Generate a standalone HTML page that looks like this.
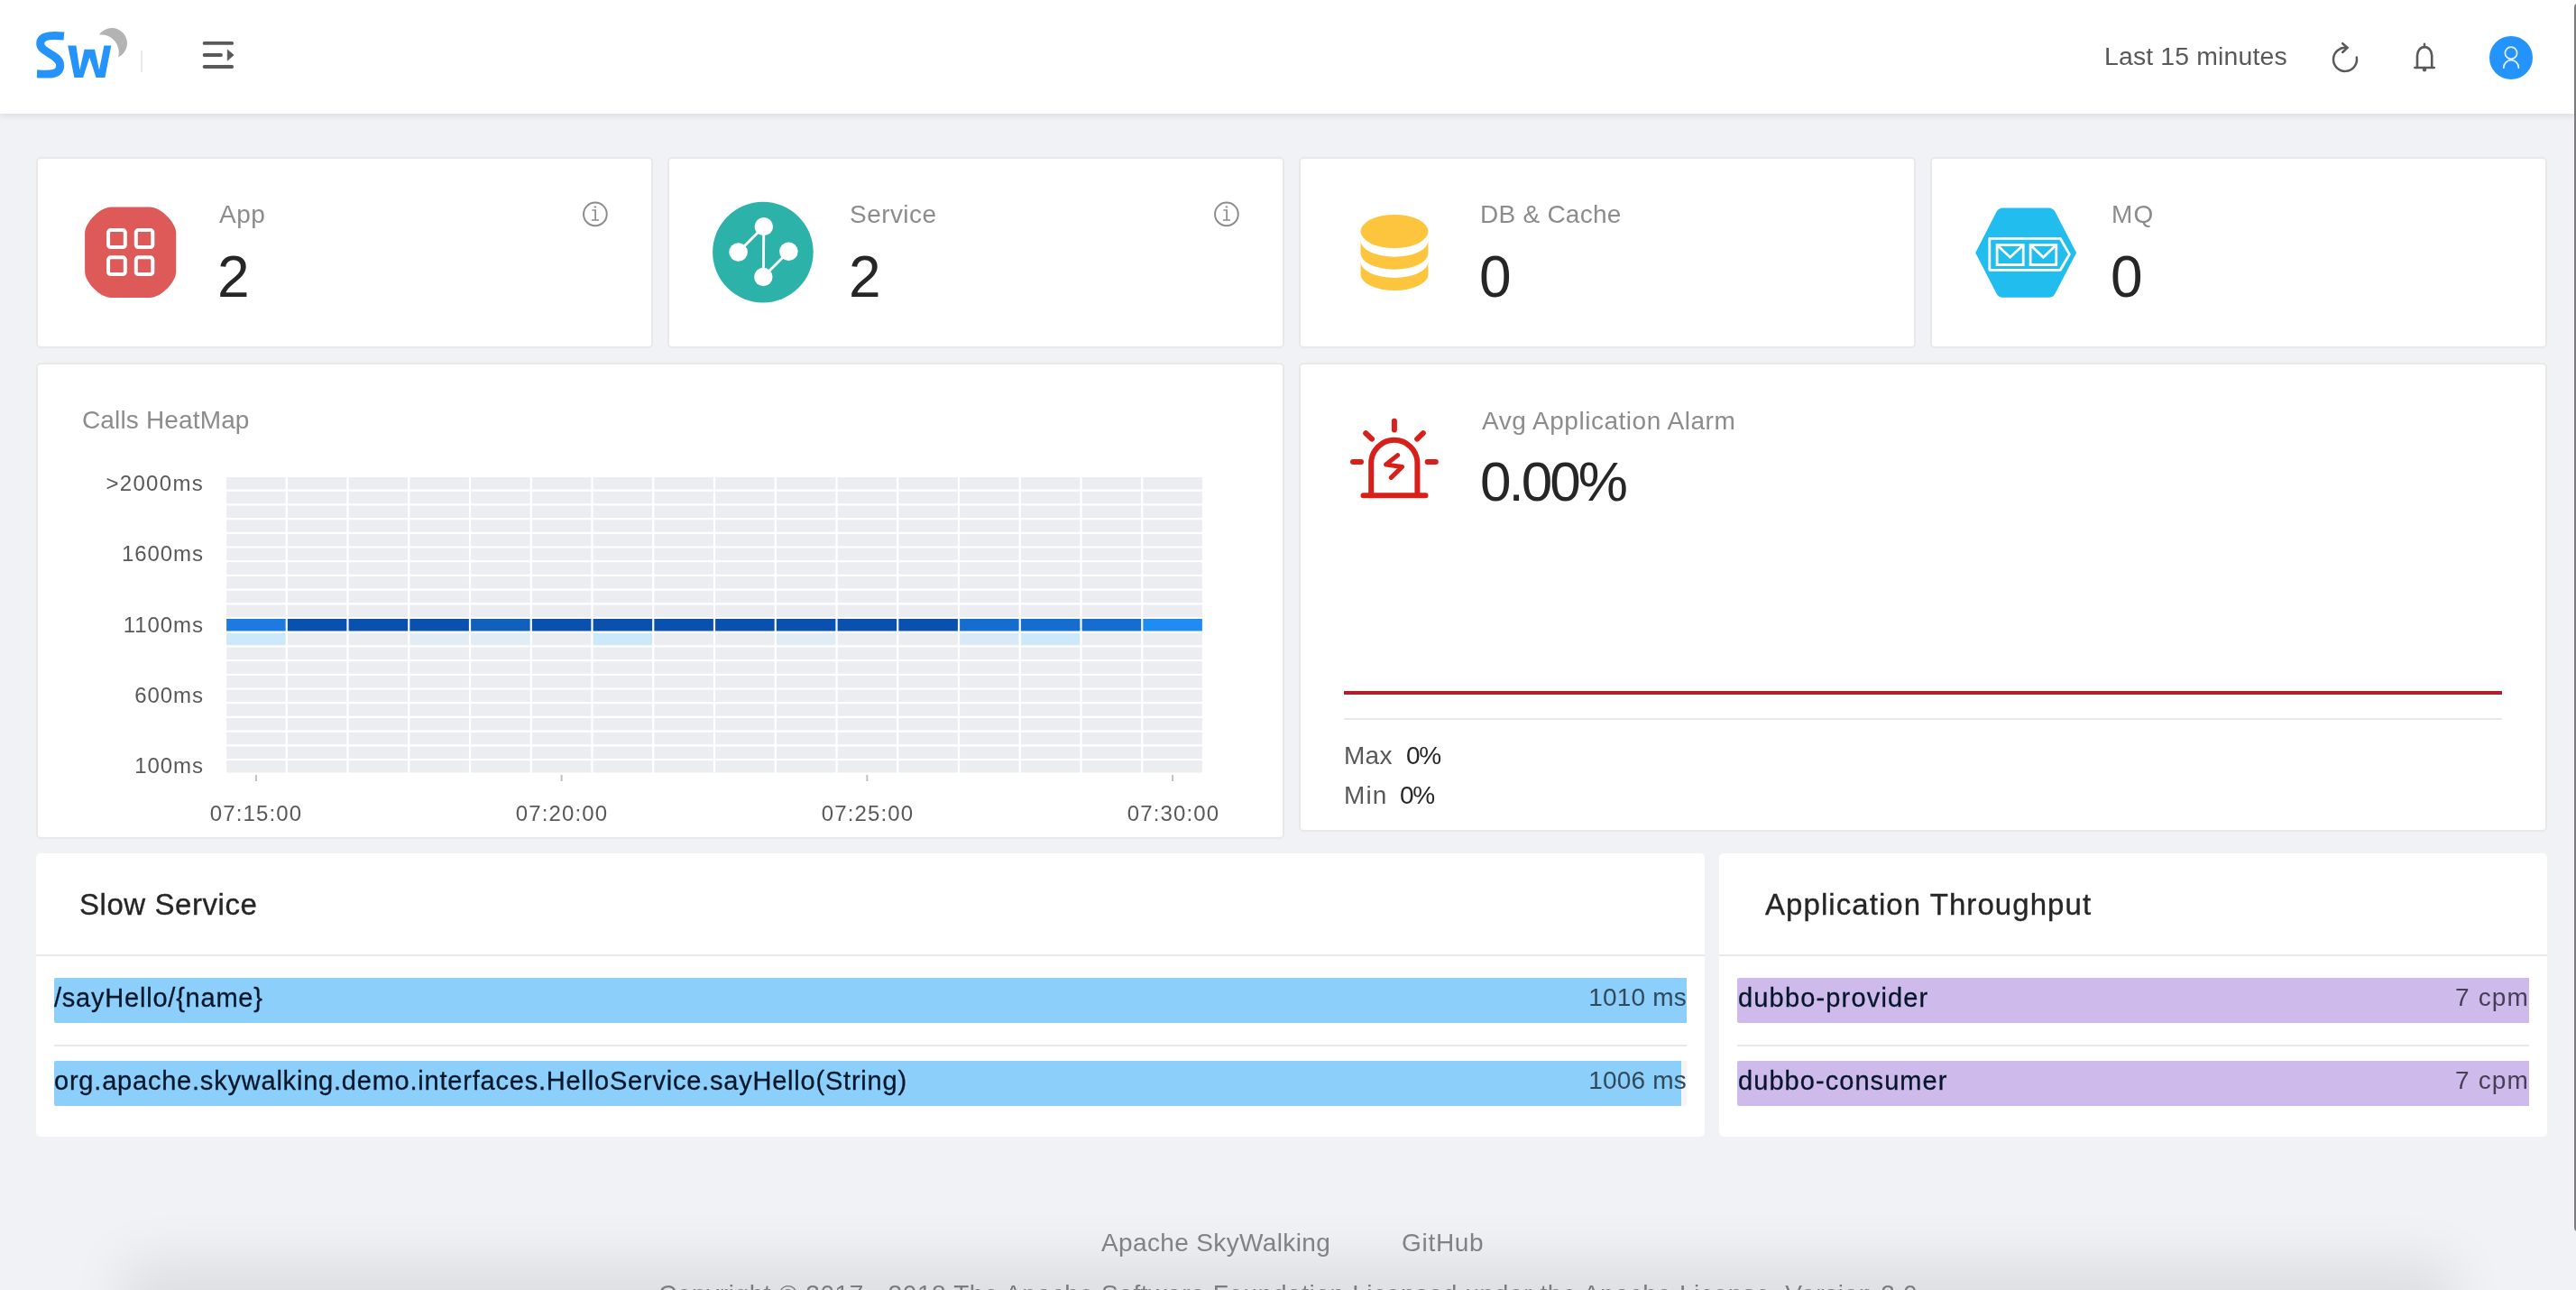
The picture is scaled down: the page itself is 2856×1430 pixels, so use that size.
<!DOCTYPE html>
<html lang="en">
<head>
<meta charset="utf-8">
<title>SkyWalking</title>
<style>
html,body{margin:0;padding:0;}
html{width:2856px;height:1430px;overflow:hidden;background:#f0f2f5;}
body{width:2856px;height:1430px;overflow:hidden;background:#f0f2f5;position:relative;font-family:"Liberation Sans",sans-serif;color:#262626;}
#root{position:absolute;left:0;top:0;width:2856px;height:1430px;overflow:hidden;background:#f0f2f5;}
.abs{position:absolute;}
.t{position:absolute;white-space:nowrap;line-height:1;}
.t,.bt,.bv{will-change:transform;}
#header{position:absolute;left:0;top:0;width:2856px;height:126px;background:#fff;box-shadow:0 2px 8px rgba(0,21,41,.10);}
.card{position:absolute;background:#fff;border:2px solid #e8e8e8;border-radius:5px;box-sizing:border-box;}
.card2{position:absolute;background:#fff;border-radius:5px;}
.hl{position:absolute;background:#e8e8e8;height:2px;}
.c45{color:#8c8c8c;}
.c65{color:#595959;}
.c85{color:#262626;}
.bar{position:absolute;height:50px;border-radius:2px 0 0 2px;}
.blue{background:#8ccffa;}
.purple{background:#cfbaec;}
.bt{position:absolute;white-space:nowrap;line-height:1;font-size:29px;color:#06172b;-webkit-text-stroke:0.3px #06172b;}
.bv{position:absolute;white-space:nowrap;line-height:1;font-size:28px;text-align:right;}
#shadow{position:absolute;left:170px;top:1431px;width:2516px;height:100px;box-shadow:0 0 60px 35px rgba(0,0,0,.08);}
#scroll{position:absolute;left:2854px;top:4px;width:8px;height:1361px;border-radius:4px;background:#7c7c7c;}
.yl{left:60px;width:166px;text-align:right;font-size:24px;letter-spacing:0.95px;}
.xl{top:890px;width:120px;text-align:center;font-size:24px;letter-spacing:1.15px;margin-left:0.6px;}
</style>
</head>
<body>
<div id="root">

<!-- ===== header ===== -->
<div id="header"></div>
<div class="abs" style="left:156px;top:56px;width:2px;height:24px;background:#e8e8e8"></div>
<!-- logo -->
<svg class="abs" style="left:30px;top:20px;filter:blur(0.5px)" width="130" height="80" viewBox="30 20 130 80">
  <path d="M110,38.6 A16.9,16.9 0 1 1 131,63.4 A19.5,19.5 0 0 0 110,38.6 Z" fill="#b3b3b3"/>
  <path d="M70.9,40.1 C62,39.2 44.7,37.6 44.7,48.4 C44.7,58.6 66.7,60.4 66.7,72.5 C66.7,83.8 54,82.4 41,81.8" fill="none" stroke="#2593fc" stroke-width="9"/>
  <path d="M75.2,50.6 L84.4,50.6 L88.4,77.6 L93.6,54.8 L105,54.8 L110,77.6 L115.4,50.6 L123.3,50.6 L116.4,86 L106.5,86 L99.3,63.7 L92.1,86 L82.4,86 Z" fill="#2593fc"/>
</svg>
<!-- menu fold icon -->
<svg class="abs" style="left:220px;top:40px" width="44" height="40" viewBox="220 40 44 40">
  <g stroke="#595959" stroke-width="3.8" stroke-linecap="round" fill="none">
    <path d="M226.6,47.9 H257.2"/>
    <path d="M226.6,61 H245"/>
    <path d="M226.6,74 H257.2"/>
  </g>
  <path d="M252.2,55 L259.2,61 L252.2,67.2 Z" fill="#595959" stroke="#595959" stroke-width="0.6" stroke-linejoin="round"/>
</svg>
<!-- header right -->
<div class="t c65" id="last15" style="left:2333px;top:48px;font-size:28.4px;letter-spacing:0.16px">Last 15 minutes</div>
<svg class="abs" style="left:2580px;top:40px" width="44" height="48" viewBox="2580 40 44 48">
  <path d="M2602.3,53.1 A13,13 0 1 0 2612.8,63.6" fill="none" stroke="#595959" stroke-width="2.5" stroke-linecap="round"/>
  <path d="M2597.2,48.2 L2602.5,52.9 L2597.2,58" fill="none" stroke="#595959" stroke-width="2.5" stroke-linecap="round" stroke-linejoin="miter"/>
</svg>
<svg class="abs" style="left:2668px;top:40px" width="40" height="48" viewBox="2668 40 40 48">
  <path d="M2677.4,75 H2698.7 M2680,75 V61.5 A8.1,9.4 0 0 1 2696.2,61.5 V75" fill="none" stroke="#595959" stroke-width="2.6" stroke-linecap="round" stroke-linejoin="round"/>
  <path d="M2688,48.8 V52" stroke="#595959" stroke-width="2.4" stroke-linecap="round"/>
  <path d="M2685.9,76 H2690.1 V77.5 A2.1,2.1 0 0 1 2685.9,77.5 Z" fill="#595959"/>
</svg>
<svg class="abs" style="left:2756px;top:36px" width="56" height="56" viewBox="2756 36 56 56">
  <circle cx="2784" cy="64" r="24" fill="#2593fc"/>
  <circle cx="2784" cy="58.7" r="6.6" fill="none" stroke="#e6f3ff" stroke-width="1.7"/>
  <path d="M2775.8,75.2 A8.3,8.6 0 0 1 2792.4,75.2" fill="none" stroke="#e6f3ff" stroke-width="1.7" stroke-linecap="round"/>
</svg>

<!-- ===== row 1 cards ===== -->
<div class="card" style="left:40px;top:174px;width:684px;height:212px"></div>
<div class="card" style="left:740px;top:174px;width:684px;height:212px"></div>
<div class="card" style="left:1440px;top:174px;width:684px;height:212px"></div>
<div class="card" style="left:2140px;top:174px;width:684px;height:212px"></div>

<!-- App icon -->
<svg class="abs" style="left:90px;top:225px" width="110" height="110" viewBox="90 225 110 110">
  <path d="M94.1,258.4 C94.1,246.4 111.1,229.4 123.1,229.4 H166.2 C178.2,229.4 195.2,246.4 195.2,258.4 V300.9 C195.2,312.9 178.2,329.9 166.2,329.9 H123.1 C111.1,329.9 94.1,312.9 94.1,300.9 Z" fill="#de5a58"/>
  <g fill="none" stroke="#fff" stroke-width="4">
    <rect x="120.1" y="255.1" width="18.7" height="18.9" rx="2.6"/>
    <rect x="150.8" y="255.1" width="18.5" height="18.9" rx="2.6"/>
    <rect x="120.1" y="285.3" width="18.7" height="18.7" rx="2.6"/>
    <rect x="150.8" y="285.3" width="18.5" height="18.7" rx="2.6"/>
  </g>
</svg>
<div class="t c45" id="t_app" style="left:242.5px;top:224px;font-size:28px;letter-spacing:0.5px">App</div>
<div class="t c85" id="v_app" style="left:241px;top:275px;font-size:64px">2</div>
<!-- info icons -->
<svg class="abs" style="left:640px;top:218px" width="40" height="40" viewBox="640 218 40 40">
  <circle cx="659.9" cy="237.45" r="12.85" fill="none" stroke="#8c8c8c" stroke-width="2"/>
  <path d="M656.4,233 H660.1 V244 M655.9,244 H664" fill="none" stroke="#8c8c8c" stroke-width="1.7"/>
  <rect x="658.7" y="228.5" width="2.4" height="1.8" fill="#8c8c8c"/>
</svg>
<svg class="abs" style="left:1340px;top:218px" width="40" height="40" viewBox="640 218 40 40">
  <circle cx="659.9" cy="237.45" r="12.85" fill="none" stroke="#8c8c8c" stroke-width="2"/>
  <path d="M656.4,233 H660.1 V244 M655.9,244 H664" fill="none" stroke="#8c8c8c" stroke-width="1.7"/>
  <rect x="658.7" y="228.5" width="2.4" height="1.8" fill="#8c8c8c"/>
</svg>
<!-- Service icon -->
<svg class="abs" style="left:786px;top:220px" width="120" height="120" viewBox="786 220 120 120">
  <circle cx="845.9" cy="279.6" r="55.8" fill="#2cb2a9"/>
  <g stroke="#fff" stroke-width="2.9" fill="none">
    <path d="M846.8,251.1 L818.6,279.5"/>
    <path d="M846.8,251.1 L846.3,307"/>
    <path d="M874.4,278.8 L846.3,307"/>
  </g>
  <g fill="#fff">
    <circle cx="846.8" cy="251.1" r="10.2"/>
    <circle cx="818.6" cy="279.5" r="10.3"/>
    <circle cx="874.4" cy="278.8" r="10.3"/>
    <circle cx="846.3" cy="307" r="10.2"/>
  </g>
</svg>
<div class="t c45" id="t_service" style="left:942px;top:224px;font-size:28px;letter-spacing:0.45px">Service</div>
<div class="t c85" id="v_service" style="left:941px;top:275px;font-size:64px">2</div>
<!-- DB icon -->
<svg class="abs" style="left:1500px;top:230px" width="92" height="100" viewBox="1500 230 92 100">
  <g fill="#fdc53e">
    <ellipse cx="1546" cy="256.5" rx="37.4" ry="18.6"/>
    <path d="M1508.6,267 A37.4,17.7 0 0 0 1583.4,267 L1583.4,281 A37.4,17.7 0 0 1 1508.6,281 Z"/>
    <path d="M1508.6,290.2 A37.4,17.7 0 0 0 1583.4,290.2 L1583.4,304.3 A37.4,17.7 0 0 1 1508.6,304.3 Z"/>
  </g>
</svg>
<div class="t c45" id="t_db" style="left:1641px;top:224px;font-size:28px;letter-spacing:0.25px">DB &amp; Cache</div>
<div class="t c85" id="v_db" style="left:1640px;top:275px;font-size:64px">0</div>
<!-- MQ icon -->
<svg class="abs" style="left:2186px;top:224px" width="122" height="112" viewBox="2186 224 122 112">
  <path d="M2190.2,280.3 L2213.4,234.9 Q2215.7,230.4 2220.8,230.4 L2271.2,230.4 Q2276.3,230.4 2278.6,234.9 L2302.1,280.3 L2278.6,325.2 Q2276.3,329.7 2271.2,329.7 L2220.8,329.7 Q2215.7,329.7 2213.4,325.2 Z" fill="#21bdee"/>
  <g fill="none" stroke="#fff" stroke-width="2.8" stroke-linejoin="round">
    <path d="M2205.8,264.4 H2284.3 L2294.4,281.85 L2284.3,299.3 H2205.8 Z"/>
    <path d="M2214.1,271.6 H2243.2 V293.5 H2214.1 Z M2214.1,271.6 L2228.6,285.2 L2243.2,271.6" stroke-linejoin="miter"/>
    <path d="M2251.1,271.6 H2279.8 V293.5 H2251.1 Z M2251.1,271.6 L2265.4,285.2 L2279.8,271.6" stroke-linejoin="miter"/>
  </g>
</svg>
<div class="t c45" id="t_mq" style="left:2341px;top:224px;font-size:28px;letter-spacing:1.2px">MQ</div>
<div class="t c85" id="v_mq" style="left:2340px;top:275px;font-size:64px">0</div>

<!-- ===== row 2 cards ===== -->
<div class="card" style="left:40px;top:402px;width:1384px;height:528px"></div>
<div class="card" style="left:1440px;top:402px;width:1384px;height:520px"></div>

<div class="t c45" id="t_heat" style="left:90.5px;top:452px;font-size:28px;letter-spacing:0.15px">Calls HeatMap</div>
<!-- alarm card -->
<svg class="abs" style="left:1490px;top:456px" width="112" height="104" viewBox="1490 456 112 104">
  <g fill="none" stroke="#d8201b" stroke-width="6" stroke-linecap="round" stroke-linejoin="round">
    <path d="M1545.9,466.8 V476.6"/>
    <path d="M1514.2,480.2 L1521,486.6"/>
    <path d="M1577.8,480.2 L1571.2,486.6"/>
    <path d="M1500,512 H1509"/>
    <path d="M1582.6,512 H1591.8"/>
    <path d="M1511.5,549.3 H1580.5"/>
    <path d="M1520.2,549.3 V513.4 A25.6,25.6 0 0 1 1571.4,513.4 V549.3" stroke-linecap="butt"/>
  </g>
  <path d="M1549.6,504.6 L1536.6,514.9 L1554.6,517.4 L1542.4,529.4" fill="none" stroke="#d8201b" stroke-width="5" stroke-linecap="round" stroke-linejoin="round"/>
</svg>
<div class="t c45" id="t_alarm" style="left:1643px;top:453px;font-size:28px;letter-spacing:0.52px">Avg Application Alarm</div>
<div class="t c85" id="v_alarm" style="left:1641px;top:503px;font-size:62px;letter-spacing:-3px">0.00%</div>
<div class="abs" style="left:1490px;top:766px;width:1284px;height:4px;background:#b21e27"></div>
<div class="hl" style="left:1490px;top:796px;width:1284px"></div>
<div class="t c65" id="t_max" style="left:1490px;top:824px;font-size:28px;letter-spacing:0.3px">Max</div>
<div class="t c85" id="v_max" style="left:1559px;top:824px;font-size:28px;letter-spacing:-1.4px">0%</div>
<div class="t c65" id="t_min" style="left:1490px;top:868px;font-size:28px;letter-spacing:1.1px">Min</div>
<div class="t c85" id="v_min" style="left:1552px;top:868px;font-size:28px;letter-spacing:-1.4px">0%</div>
<!-- heatmap -->
<svg class="abs" style="left:240px;top:520px" width="1110" height="350" viewBox="240 520 1110 350">
<rect x="250.0" y="528.0" width="1084.0" height="329.7" fill="#ebedf1"/>
<rect x="250.0" y="685.0" width="67.75" height="15.7" fill="#1d7ae0"/>
<rect x="317.75" y="685.0" width="67.75" height="15.7" fill="#0a50ae"/>
<rect x="385.5" y="685.0" width="67.75" height="15.7" fill="#0a50ae"/>
<rect x="453.25" y="685.0" width="67.75" height="15.7" fill="#0a50ae"/>
<rect x="521.0" y="685.0" width="67.75" height="15.7" fill="#1260bd"/>
<rect x="588.75" y="685.0" width="67.75" height="15.7" fill="#0a50ae"/>
<rect x="656.5" y="685.0" width="67.75" height="15.7" fill="#0a50ae"/>
<rect x="724.25" y="685.0" width="67.75" height="15.7" fill="#0a50ae"/>
<rect x="792.0" y="685.0" width="67.75" height="15.7" fill="#0a50ae"/>
<rect x="859.75" y="685.0" width="67.75" height="15.7" fill="#0a50ae"/>
<rect x="927.5" y="685.0" width="67.75" height="15.7" fill="#0a50ae"/>
<rect x="995.25" y="685.0" width="67.75" height="15.7" fill="#0a50ae"/>
<rect x="1063.0" y="685.0" width="67.75" height="15.7" fill="#166dd0"/>
<rect x="1130.75" y="685.0" width="67.75" height="15.7" fill="#166dd0"/>
<rect x="1198.5" y="685.0" width="67.75" height="15.7" fill="#166dd0"/>
<rect x="1266.25" y="685.0" width="67.75" height="15.7" fill="#208bf0"/>
<rect x="250.0" y="700.7" width="67.75" height="15.7" fill="#cde8f9"/>
<rect x="453.25" y="700.7" width="67.75" height="15.7" fill="#e1ecf4"/>
<rect x="521.0" y="700.7" width="67.75" height="15.7" fill="#e1ecf4"/>
<rect x="656.5" y="700.7" width="67.75" height="15.7" fill="#cde8f9"/>
<rect x="859.75" y="700.7" width="67.75" height="15.7" fill="#e1ecf4"/>
<rect x="1063.0" y="700.7" width="67.75" height="15.7" fill="#d9e9f5"/>
<rect x="1130.75" y="700.7" width="67.75" height="15.7" fill="#cde8f9"/>
<path d="M250.00,527.0V858.7M317.75,527.0V858.7M385.50,527.0V858.7M453.25,527.0V858.7M521.00,527.0V858.7M588.75,527.0V858.7M656.50,527.0V858.7M724.25,527.0V858.7M792.00,527.0V858.7M859.75,527.0V858.7M927.50,527.0V858.7M995.25,527.0V858.7M1063.00,527.0V858.7M1130.75,527.0V858.7M1198.50,527.0V858.7M1266.25,527.0V858.7M1334.00,527.0V858.7M249.0,528.00H1335.0M249.0,543.70H1335.0M249.0,559.40H1335.0M249.0,575.10H1335.0M249.0,590.80H1335.0M249.0,606.50H1335.0M249.0,622.20H1335.0M249.0,637.90H1335.0M249.0,653.60H1335.0M249.0,669.30H1335.0M249.0,685.00H1335.0M249.0,700.70H1335.0M249.0,716.40H1335.0M249.0,732.10H1335.0M249.0,747.80H1335.0M249.0,763.50H1335.0M249.0,779.20H1335.0M249.0,794.90H1335.0M249.0,810.60H1335.0M249.0,826.30H1335.0M249.0,842.00H1335.0M249.0,857.70H1335.0" stroke="#fff" stroke-width="2.2" fill="none"/>
<path d="M283.88,859V866M622.62,859V866M961.38,859V866M1300.12,859V866" stroke="#bfbfbf" stroke-width="2" fill="none"/>
</svg>
<div class="t c65 yl" style="top:523.5px;letter-spacing:1.3px;left:60.4px">&gt;2000ms</div>
<div class="t c65 yl" style="top:602.0px">1600ms</div>
<div class="t c65 yl" style="top:680.5px">1100ms</div>
<div class="t c65 yl" style="top:759.0px">600ms</div>
<div class="t c65 yl" style="top:837.4px">100ms</div>
<div class="t c65 xl" style="left:223.9px">07:15:00</div>
<div class="t c65 xl" style="left:562.6px">07:20:00</div>
<div class="t c65 xl" style="left:901.4px">07:25:00</div>
<div class="t c65 xl" style="left:1240.1px">07:30:00</div>

<!-- ===== row 3 cards ===== -->
<div class="card2" style="left:40px;top:946px;width:1850px;height:314px"></div>
<div class="card2" style="left:1906px;top:946px;width:918px;height:314px"></div>

<!-- Slow Service -->
<div class="t c85" id="t_slow" style="-webkit-text-stroke:0.35px #262626;left:88px;top:986px;font-size:33px;letter-spacing:0.55px">Slow Service</div>
<div class="hl" style="left:40px;top:1058px;width:1850px"></div>
<div class="bar" style="left:60px;top:1084px;width:1810px;background:#f5f5f5"></div>
<div class="bar blue" style="left:60px;top:1084px;width:1810px"></div>
<div class="bt" id="s1" style="left:60px;top:1092px;letter-spacing:0.78px">/sayHello/{name}</div>
<div class="bv" id="s1v" style="left:1670px;width:200px;top:1092px;color:#304a5b;letter-spacing:0.2px">1010 ms</div>
<div class="hl" style="left:60px;top:1158px;width:1810px"></div>
<div class="bar" style="left:60px;top:1176px;width:1810px;background:#f5f5f5"></div>
<div class="bar blue" style="left:60px;top:1176px;width:1804px"></div>
<div class="bt" id="s2" style="left:60px;top:1184px;letter-spacing:0.79px">org.apache.skywalking.demo.interfaces.HelloService.sayHello(String)</div>
<div class="bv" id="s2v" style="left:1670px;width:200px;top:1184px;color:#304a5b;letter-spacing:0.2px">1006 ms</div>
<!-- Application Throughput -->
<div class="t c85" id="t_thr" style="-webkit-text-stroke:0.35px #262626;left:1957px;top:986px;font-size:33px;letter-spacing:1.06px">Application Throughput</div>
<div class="hl" style="left:1906px;top:1058px;width:918px"></div>
<div class="bar purple" style="left:1926px;top:1084px;width:878px"></div>
<div class="bt" id="a1" style="left:1927px;top:1092px;letter-spacing:1.17px">dubbo-provider</div>
<div class="bv" id="a1v" style="left:2604px;width:200px;top:1092px;color:#483f57;letter-spacing:1.15px">7 cpm</div>
<div class="hl" style="left:1926px;top:1158px;width:878px"></div>
<div class="bar purple" style="left:1926px;top:1176px;width:878px"></div>
<div class="bt" id="a2" style="left:1927px;top:1184px;letter-spacing:1.06px">dubbo-consumer</div>
<div class="bv" id="a2v" style="left:2604px;width:200px;top:1184px;color:#483f57;letter-spacing:1.15px">7 cpm</div>
<!-- footer -->
<div class="t" id="f1" style="left:1221px;top:1364px;font-size:28px;letter-spacing:0.36px;color:#848587">Apache SkyWalking</div>
<div class="t" id="f2" style="left:1554px;top:1364px;font-size:28px;letter-spacing:0.7px;color:#848587">GitHub</div>
<div class="t" id="f3" style="left:730px;top:1421px;font-size:28px;letter-spacing:0.6px;color:#848587">Copyright © 2017 - 2018 The Apache Software Foundation Licensed under the Apache License, Version 2.0</div>

<div id="shadow"></div>
<div id="scroll"></div>
</div>
</body>
</html>
